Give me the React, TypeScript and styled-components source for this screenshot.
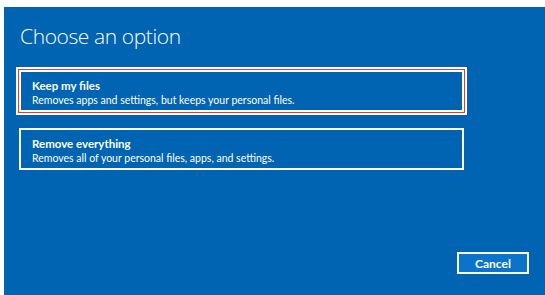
import React, { useState } from 'react'
import styled, { createGlobalStyle } from 'styled-components'

const COLORS = {
  blue: '#0064b2',
  buttonBlue: '#0a73cc',
  white: '#ffffff',
  focus: '#e0393e',
}

type Option = {
  value: string
  title: string
  description: string
}

const OPTIONS: Option[] = [
  {
    value: 'keep',
    title: 'Keep my files',
    description: 'Removes apps and settings, but keeps your personal files.',
  },
  {
    value: 'remove',
    title: 'Remove everything',
    description: 'Removes all of your personal files, apps, and settings.',
  },
]

const GlobalStyle = createGlobalStyle`
  html, body {
    margin: 0;
    padding: 0;
    background: ${COLORS.white};
    font-family: Lato, "Open Sans", sans-serif;
    overflow: hidden;
  }
`

export default function App() {
  const [focused, setFocused] = useState('keep')

  return (
    <>
      <GlobalStyle />
      <Screen>
        <Title>Choose an option</Title>
        <OptionList>
          {OPTIONS.map((option) => (
            <OptionCard
              key={option.value}
              $focused={focused === option.value}
              onClick={() => setFocused(option.value)}
            >
              <OptionTitle>{option.title}</OptionTitle>
              <OptionText>{option.description}</OptionText>
            </OptionCard>
          ))}
        </OptionList>
        <Footer>
          <CancelButton>Cancel</CancelButton>
        </Footer>
      </Screen>
    </>
  )
}

const Screen = styled.div`
  margin: 7px 0 0 4px;
  height: 288px;
  background: ${COLORS.blue};
  display: flex;
  flex-direction: column;
  padding: 0 16px 21px 15px;
  box-sizing: border-box;
  color: ${COLORS.white};
`

const Title = styled.h1`
  margin: 15px 0 0 1px;
  font-family: "Open Sans", sans-serif;
  font-size: 21px;
  line-height: 28px;
  font-weight: 300;
  letter-spacing: -0.4px;
`

const OptionList = styled.div`
  display: flex;
  flex-direction: column;
  gap: 16px;
  margin-top: 20px;
`

const OptionCard = styled.button<{ $focused: boolean }>`
  width: 445px;
  height: 42px;
  box-sizing: border-box;
  border: 2px solid ${COLORS.white};
  background: transparent;
  color: ${COLORS.white};
  text-align: left;
  padding: 3px 11px 0;
  font-family: inherit;
  cursor: pointer;
  outline: none;
  box-shadow: ${(props) =>
    props.$focused
      ? `0 0 0 1px ${COLORS.focus}, 0 0 0 3px ${COLORS.white}`
      : 'none'};
`

const OptionTitle = styled.div`
  font-size: 11.5px;
  font-weight: 700;
  line-height: 15px;
`

const OptionText = styled.div`
  font-size: 10.5px;
  line-height: 14px;
`

const Footer = styled.div`
  margin-top: auto;
  display: flex;
  justify-content: flex-end;
`

const CancelButton = styled.button`
  width: 72px;
  height: 22px;
  box-sizing: border-box;
  border: 2px solid ${COLORS.white};
  background: ${COLORS.buttonBlue};
  color: ${COLORS.white};
  font-family: inherit;
  font-size: 12px;
  font-weight: 700;
  padding: 0;
  cursor: pointer;
`
